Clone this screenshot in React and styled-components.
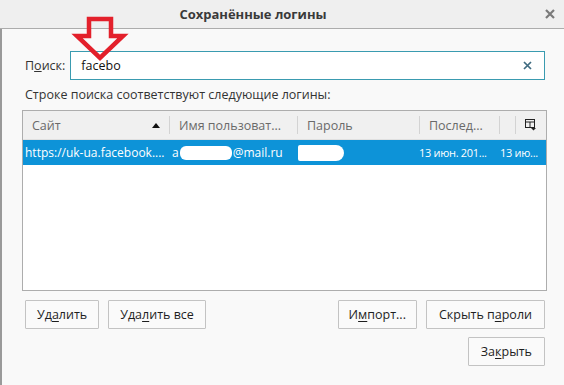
import styled, { createGlobalStyle } from 'styled-components';

const GlobalStyle = createGlobalStyle`
  html, body {
    margin: 0;
    padding: 0;
    background: #f9f9f9;
  }
  * {
    box-sizing: border-box;
  }
`;

const Window = styled.div`
  position: relative;
  width: 564px;
  height: 385px;
  background: #f9f9f9;
  font-family: 'Open Sans', 'Noto Sans', sans-serif;
  font-size: 12px;
  color: #2b2b2b;
  overflow: hidden;
  display: flex;
  flex-direction: column;
`;

const TitleBar = styled.div`
  height: 29px;
  flex: none;
  background: #efefef;
  border-bottom: 1px solid #acacac;
  display: flex;
  align-items: center;
  justify-content: center;
  position: relative;
`;

const Title = styled.span`
  font-weight: bold;
  font-size: 13px;
  color: #3a3a3a;
  margin-right: 58px;
`;

const CloseBtn = styled.span`
  position: absolute;
  right: 7px;
  top: 7px;
  width: 14px;
  height: 14px;
  display: flex;
  align-items: center;
  justify-content: center;
`;

const Body = styled.div`
  flex: 1;
  border-left: 2px solid #9a9a9a;
  padding: 22px 19px 0 20px;
  display: flex;
  flex-direction: column;
`;

const SearchRow = styled.div`
  display: flex;
  align-items: center;
  gap: 5px;
  padding-left: 3px;
`;

const Label = styled.span`
  font-size: 12.5px;
  color: #333;
`;

const SearchBox = styled.div`
  flex: 1;
  height: 29px;
  border: 1px solid #3a9bb0;
  background: #fff;
  display: flex;
  align-items: center;
  padding: 0 12px 0 10px;
  font-size: 12.5px;
  color: #111;
`;

const SearchText = styled.span`
  flex: 1;
`;

const Hint = styled.div`
  margin-top: 6px;
  padding-left: 3px;
  font-size: 12.5px;
  color: #333;
`;

const Table = styled.div`
  margin-top: 7px;
  height: 181px;
  border: 1px solid #adadad;
  background: #fff;
  display: flex;
  flex-direction: column;
  margin-right: -2px;
`;

const cols = '146px 128px 122px 80px 16px 1fr';

const HeaderRow = styled.div`
  display: grid;
  grid-template-columns: ${cols};
  height: 29px;
  background: #f0f0f0;
  border-bottom: 1px solid #e0e0e0;
`;

const HeadCell = styled.div`
  display: flex;
  align-items: center;
  padding-left: 9px;
  color: #6a6a6a;
  font-size: 12.5px;
  white-space: nowrap;
  overflow: hidden;
  justify-content: ${(p) => (p.$center ? 'center' : 'flex-start')};
  border-left: ${(p) => (p.$first ? 'none' : '1px solid #d3d3d3')};
  margin: 5px 0;
  ${(p) => (p.$center ? 'padding-left: 0;' : '')}
`;

const HeadText = styled.span`
  flex: 1;
  overflow: hidden;
`;

const SortArrow = styled.span`
  width: 0;
  height: 0;
  border-left: 4px solid transparent;
  border-right: 4px solid transparent;
  border-bottom: 5px solid #111;
  margin-right: 9px;
`;

const DataRow = styled.div`
  display: grid;
  grid-template-columns: ${cols};
  height: 25px;
  background: ${(p) => (p.$selected ? '#0d93d8' : '#fff')};
  color: ${(p) => (p.$selected ? '#fff' : '#222')};
`;

const Cell = styled.div`
  display: flex;
  align-items: center;
  padding-left: ${(p) => (p.$pl !== undefined ? p.$pl : 2)}px;
  font-size: ${(p) => (p.$narrow ? '11px' : '12px')};
  letter-spacing: ${(p) => (p.$narrow ? '-0.3px' : 'normal')};
  white-space: nowrap;
  overflow: hidden;
  grid-column: ${(p) => p.$span || 'auto'};
`;

const Blob = styled.span`
  display: inline-block;
  width: ${(p) => p.$w}px;
  height: ${(p) => p.$h}px;
  background: #fff;
  border-radius: ${(p) => p.$r || '3px'};
  margin: 0 1px;
`;

const Buttons = styled.div`
  display: flex;
  align-items: center;
  margin-top: 9px;
  padding-left: 3px;
  gap: 9px;
`;

const Spacer = styled.div`
  flex: 1;
`;

const Button = styled.button`
  height: 29px;
  padding: 0 ${(p) => p.$px || 11}px;
  background: #fafafa;
  border: 1px solid #c3c3c3;
  border-radius: 1px;
  font-family: inherit;
  font-size: 12.5px;
  color: #1e1e1e;
  cursor: default;
  u {
    text-decoration-thickness: 1px;
    text-underline-offset: 2px;
  }
`;

const CloseRow = styled.div`
  display: flex;
  justify-content: flex-end;
  margin-top: 8px;
`;

const Arrow = styled.svg`
  position: absolute;
  left: 71px;
  top: 16px;
`;

function ColumnPicker() {
  return (
    <svg width="12" height="12" viewBox="0 0 12 12">
      <rect x="0.5" y="0.5" width="9" height="8" fill="none" stroke="#222" />
      <line x1="0.5" y1="3" x2="9.5" y2="3" stroke="#222" />
      <line x1="5" y1="3" x2="5" y2="8.5" stroke="#222" />
      <path d="M6 9 L11 9 L8.5 11.5 Z" fill="#222" />
    </svg>
  );
}

export default function App() {
  return (
    <>
      <GlobalStyle />
      <Window>
        <TitleBar>
          <Title>Сохранённые логины</Title>
          <CloseBtn>
            <svg width="10" height="10" viewBox="0 0 10 10">
              <path d="M1 1 L9 9 M9 1 L1 9" stroke="#7a7a7a" strokeWidth="2.2" />
            </svg>
          </CloseBtn>
        </TitleBar>
        <Body>
          <SearchRow>
            <Label>
              П<u>о</u>иск:
            </Label>
            <SearchBox>
              <SearchText>facebo</SearchText>
              <svg width="9" height="9" viewBox="0 0 9 9">
                <path d="M1 1 L8 8 M8 1 L1 8" stroke="#3f6b80" strokeWidth="1.7" />
              </svg>
            </SearchBox>
          </SearchRow>
          <Hint>Строке поиска соответствуют следующие логины:</Hint>
          <Table>
            <HeaderRow>
              <HeadCell $first>
                <HeadText>Сайт</HeadText>
                <SortArrow />
              </HeadCell>
              <HeadCell>
                <HeadText>Имя пользоват...</HeadText>
              </HeadCell>
              <HeadCell>
                <HeadText>Пароль</HeadText>
              </HeadCell>
              <HeadCell>
                <HeadText>Послед...</HeadText>
              </HeadCell>
              <HeadCell />
              <HeadCell $center>
                <ColumnPicker />
              </HeadCell>
            </HeaderRow>
            <DataRow $selected>
              <Cell>https://uk-ua.facebook....</Cell>
              <Cell $pl={3}>
                a<Blob $w={52} $h={14} $r="6px" />@mail.ru
              </Cell>
              <Cell $pl={0}>
                <Blob $w={46} $h={16} $r="2px 8px 8px 2px" />
              </Cell>
              <Cell $pl={0} $narrow>
                13 июн. 201...
              </Cell>
              <Cell $span="5 / 7" $pl={1} $narrow>
                13 ию...
              </Cell>
            </DataRow>
          </Table>
          <Buttons>
            <Button>
              Уд<u>а</u>лить
            </Button>
            <Button>
              Уда<u>л</u>ить все
            </Button>
            <Spacer />
            <Button $px={10}>
              И<u>м</u>порт...
            </Button>
            <Button $px={12}>
              Скрыть п<u>а</u>роли
            </Button>
          </Buttons>
          <CloseRow>
            <Button $px={12}>
              За<u>к</u>рыть
            </Button>
          </CloseRow>
        </Body>
        <Arrow width="60" height="46" viewBox="0 0 60 46">
          <path
            d="M18 3 L40 3 L40 20 L52 20 L29 42 L6 20 L18 20 Z"
            fill="none"
            stroke="#e3202b"
            strokeWidth="4.5"
            strokeLinejoin="miter"
          />
        </Arrow>
      </Window>
    </>
  );
}
